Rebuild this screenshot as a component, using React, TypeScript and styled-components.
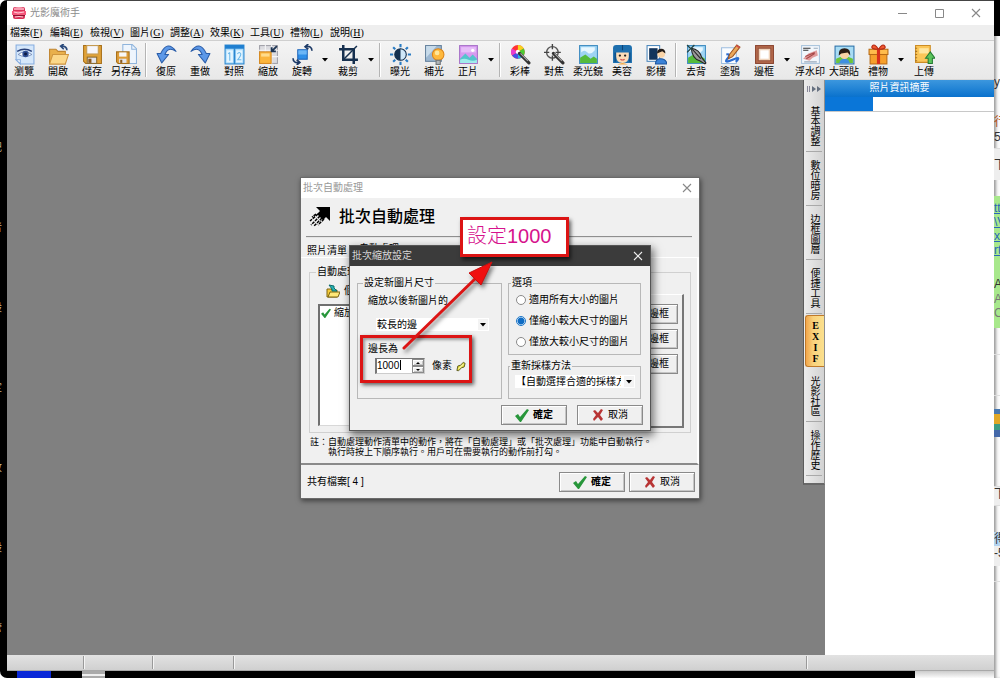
import React from "react";
import styled, { createGlobalStyle, css } from "styled-components";

const Global = createGlobalStyle`
  *, *::before, *::after { box-sizing: border-box; }
  html, body { margin: 0; padding: 0; background: #000; }
  body, button, input, select {
    font-family: "Liberation Sans", "Noto Sans CJK TC", sans-serif;
    font-size: 10px;
    line-height: 12px;
    color: #000;
  }
  button { margin: 0; padding: 0; border: 0; background: none; }
  svg { display: block; flex: none; }
  h1, h2, p, ul { margin: 0; padding: 0; font-size: inherit; font-weight: inherit; }
  ul { list-style: none; }
`;

/* ---------- desktop ---------- */

const Desktop = styled.div`
  position: relative;
  display: grid;
  grid-template-columns: 7px minmax(0, 1fr) 6px;
  grid-template-rows: minmax(0, 1fr) 7px;
  min-height: 100vh;
  overflow: hidden;
  background: #000;
`;

const LeftStrip = styled.div`
  grid-row: 1 / 3;
  display: flex;
  flex-direction: column;
  gap: 68px;
  padding-top: 142px;
  overflow: hidden;
  border-radius: 7px 0 0 7px;
  box-shadow: 0 0 0 7px #fff;
  clip-path: inset(0);
  color: #c8b48c;
`;

const LeftGlyph = styled.span`
  width: 2px;
  height: 12px;
  overflow: hidden;
  direction: rtl;
  white-space: nowrap;
`;

const RightStrip = styled.div`
  grid-column: 3;
  grid-row: 1 / 3;
  display: flex;
  flex-direction: column;
  overflow: hidden;
  background: #fbfbfb;
  box-shadow: inset 3px 0 3px -1px #999;
`;

const Slice = styled.div<{ $h: number; $bg?: string; $fg?: string; $line?: boolean }>`
  flex: none;
  height: ${(p) => p.$h}px;
  overflow: hidden;
  white-space: nowrap;
  font-size: 12px;
  line-height: 14px;
  background: ${(p) => p.$bg ?? "transparent"};
  color: ${(p) => p.$fg ?? "#333"};
  ${(p) => p.$line && css`border-bottom: 1px solid #ddd;`}
`;

const SliceLink = styled.a`
  display: block;
  color: #2a66b8;
`;

const BottomStrip = styled.div`
  grid-column: 2;
  grid-row: 2;
  display: flex;
  background: #000;
`;

const Chip = styled.span<{ $w: number; $bg?: string }>`
  width: ${(p) => p.$w}px;
  background: ${(p) => p.$bg ?? "transparent"};
`;

const BottomPage = styled.span`
  width: 79px;
  margin-left: auto;
  background: linear-gradient(#ccc, #fbfbfb);
`;

/* ---------- main window ---------- */

const MainWindow = styled.main`
  grid-column: 2;
  grid-row: 1;
  display: flex;
  flex-direction: column;
  min-width: 0;
  border-top: 1px solid #444;
  background: #efefef;
`;

const TitleBar = styled.header`
  display: flex;
  align-items: center;
  gap: 4px;
  height: 24px;
  padding: 0 11px 0 5px;
  background: #fff;
  color: #8c8c8c;
`;

const WindowTitle = styled.h1`
  flex: 1;
`;

const WindowButtons = styled.div`
  display: flex;
  gap: 23px;
`;

const IconButton = styled.button`
  display: grid;
  place-items: center;
  width: 14px;
  height: 14px;
`;

const MenuBar = styled.nav`
  display: flex;
  height: 16px;
  padding-left: 3px;
  background: #eee;
  border-bottom: 1px solid #cfcfcf;
`;

const MenuButton = styled.button`
  width: 40px;
  text-align: left;
  white-space: nowrap;
`;

const Mnemonic = styled.span`
  font-family: "Liberation Serif", serif;
`;

const ToolBar = styled.div`
  display: flex;
  height: 39px;
  background: linear-gradient(#f4f4f4, #e8e8e8);
  border-bottom: 1px solid #d8d8d8;
`;

const ToolButton = styled.button`
  display: flex;
  flex-direction: column;
  align-items: center;
  gap: 1px;
  width: 34px;
  padding-top: 3px;
  white-space: nowrap;
`;

const DropButton = styled.button`
  display: grid;
  place-items: center;
  width: 12px;
`;

const ToolSeparator = styled.span`
  width: 2px;
  margin: 2px;
  border-left: 1px solid #b4b4b4;
  border-right: 1px solid #fff;
`;

const Workspace = styled.div`
  flex: 1;
  display: flex;
  align-items: stretch;
  min-height: 0;
  background: #808080;
`;

const Canvas = styled.section`
  flex: 1;
`;

const Rail = styled.nav`
  align-self: flex-start;
  display: flex;
  flex-direction: column;
  width: 22px;
  padding-bottom: 7px;
  background: linear-gradient(90deg, #ececec, #d2d2d2);
  border-left: 1px solid #5c5c5c;
  border-right: 1px solid #8f8f8f;
  border-bottom: 2px solid #686868;
`;

const RailHandle = styled.button`
  display: grid;
  place-items: center;
  height: 18px;
`;

const RailTab = styled.button<{ $active?: boolean }>`
  display: flex;
  align-items: center;
  justify-content: center;
  height: 54px;
  padding-top: 2px;
  writing-mode: vertical-rl;
  text-orientation: upright;
  background: linear-gradient(#a9a9a9, #a9a9a9) center bottom / 16px 1px no-repeat;
  ${(p) =>
    p.$active &&
    css`
      height: 52px;
      margin: 1px 0 1px 1px;
      border: 1px solid #c07a2a;
      border-right: 0;
      border-radius: 3px 0 0 3px;
      background: linear-gradient(90deg, #f3a64a, #f9d27c 40%, #fbe08e);
      font-family: "Liberation Serif", serif;
      font-weight: 700;
    `}
`;

const InfoPanel = styled.aside`
  width: 169px;
  background: #fff;
`;

const InfoTitle = styled.h2`
  height: 17px;
  padding-right: 20px;
  line-height: 16px;
  text-align: center;
  color: #fff;
  background: linear-gradient(#3c97de, #0a72cd);
`;

const InfoRow = styled.div`
  display: grid;
  grid-template-columns: 48px 1fr;
  height: 15px;
  border-bottom: 1px solid #c8c8c8;
`;

const InfoKey = styled.span`
  background: #0a76d8;
`;

const StatusBar = styled.footer`
  display: flex;
  height: 16px;
  background: linear-gradient(#e2e2e2, #d0d0d0);
  border-bottom: 1px solid #a8a8a8;
`;

const StatusCell = styled.span<{ $w?: number }>`
  ${(p) => (p.$w ? css`width: ${p.$w}px;` : css`flex: 1;`)}
  margin: 1px 0;
  border-right: 1px solid #999;
  box-shadow: 1px 0 0 #f4f4f4;
`;

/* ---------- dialogs ---------- */

const BatchDialog = styled.section`
  position: absolute;
  left: calc(50% - 199px);
  top: calc(50% - 161px);
  width: 398px;
  display: flex;
  flex-direction: column;
  background: #f0f0f0;
  box-shadow: 0 0 0 1px #6a6a6a, 1px 2px 5px 1px rgba(0, 0, 0, 0.5);
`;

const ScaleDialog = styled.section`
  position: absolute;
  left: 49px;
  top: 68px;
  width: 300px;
  background: #f0f0f0;
  box-shadow: 0 0 0 1px #555, 2px 4px 8px 2px rgba(0, 0, 0, 0.5);
`;

const DialogBar = styled.header<{ $dark?: boolean }>`
  display: flex;
  align-items: center;
  justify-content: space-between;
  height: 20px;
  padding: 0 5px 0 2px;
  background: ${(p) => (p.$dark ? "#3b3b3b" : "#fff")};
  color: ${(p) => (p.$dark ? "#d8d8d8" : "#999")};
`;

const DialogHeading = styled.div`
  display: flex;
  align-items: center;
  gap: 8px;
  height: 40px;
  margin: 0 7px 0 5px;
  padding-left: 3px;
  border-bottom: 2px groove #e4e4e4;
`;

const HeadingText = styled.h2`
  font-size: 16px;
  line-height: 20px;
  font-weight: 500;
`;

const TabRow = styled.div`
  display: flex;
  align-items: flex-end;
  gap: 12px;
  height: 19px;
  padding-left: 6px;
`;

const Tab = styled.button<{ $active?: boolean }>`
  height: ${(p) => (p.$active ? 14 : 12)}px;
  line-height: 12px;
  display: flex;
`;

const TabPage = styled.div`
  padding: 8px 6px 6px 8px;
  border-top: 1px solid #fff;
  border-right: 2px solid #fff;
  border-bottom: 2px solid #8a8a8a;
`;

const Group = styled.fieldset`
  min-width: 0;
  margin: 0;
  padding: 0 6px 6px 10px;
  border: 1px solid #b8b8b8;
  box-shadow: none;
`;

const Legend = styled.legend`
  height: 12px;
  margin-left: -5px;
  padding: 0 1px;
  white-space: nowrap;
`;

const ActionGroup = styled(Group)`
  height: 167px;
  padding: 0 6px 4px 8px;
  border-color: #d0d0d0;
`;

const ActionLegend = styled(Legend)`
  margin-left: -2px;
`;

const ActionGrid = styled.div`
  display: grid;
  grid-template-columns: 1fr 60px;
  height: 150px;
`;

const ActionList = styled.div`
  display: flex;
  flex-direction: column;
`;

const ActionTool = styled.button`
  display: flex;
  align-items: center;
  gap: 4px;
  height: 26px;
  padding-left: 8px;
`;

const ListBox = styled.ul`
  flex: 1;
  margin-bottom: 2px;
  padding: 1px;
  background: #fff;
  border: 1px solid #d8d8d8;
  border-top: 2px solid #707070;
  border-left: 2px solid #707070;
`;

const ListItem = styled.li`
  display: flex;
  align-items: center;
  gap: 3px;
`;

const FrameButtons = styled.div`
  display: flex;
  flex-direction: column;
  gap: 5px;
  margin-top: 16px;
  padding: 9px 4px 0 0;
  border-top: 1px solid #fff;
  border-right: 2px solid #777;
  border-bottom: 2px solid #777;
`;

const raised = css`
  border: 1px solid #8a8a8a;
  background: #f0f0f0;
  box-shadow: inset 1px 1px 0 #fff, inset -1px -1px 0 #c6c6c6;
`;

const FrameButton = styled.button`
  ${raised}
  height: 20px;
  padding-right: 8px;
  text-align: right;
`;

const Note = styled.p`
  margin-top: 4px;
  padding-left: 19px;
  text-indent: -18px;
  font-size: 9px;
  line-height: 10px;
  white-space: nowrap;
`;

const SecondNote = styled(Note)`
  margin-top: 0;
  text-indent: 0;
`;

const DialogFooter = styled.footer`
  display: flex;
  align-items: center;
  gap: 4px;
  height: 33px;
  padding: 0 4px 0 6px;
`;

const FileCount = styled.span`
  flex: 1;
`;

const PushButton = styled.button<{ $strong?: boolean }>`
  ${raised}
  display: flex;
  align-items: center;
  justify-content: center;
  gap: 4px;
  width: 66px;
  height: 20px;
  font-weight: ${(p) => (p.$strong ? 700 : 400)};
`;

const ScaleBody = styled.div`
  display: grid;
  grid-template-columns: 145px 133px;
  gap: 6px;
  padding: 11px 8px 6px 7px;
`;

const SizeGroup = styled(Group)`
  display: flex;
  flex-direction: column;
  align-items: flex-start;
`;

const RightColumn = styled.div`
  display: flex;
  flex-direction: column;
  justify-content: space-between;
  gap: 5px;
`;

const FieldLabel = styled.label`
  margin-top: 6px;
`;

const SelectBox = styled.div<{ $w: number }>`
  position: relative;
  width: ${(p) => p.$w}px;
  height: 13px;
  background: #fff;
`;

const Select = styled.select`
  display: block;
  width: 100%;
  height: 13px;
  padding: 0 14px 0 1px;
  border: 0;
  border-radius: 0;
  background: transparent;
  appearance: none;
  overflow: hidden;
`;

const SelectArrow = styled.span`
  position: absolute;
  right: 1px;
  top: 1px;
  display: grid;
  place-items: center;
  width: 10px;
  height: 11px;
  background: #f3f3f3;
  pointer-events: none;
`;

const SizeRow = styled.div`
  display: flex;
  align-items: center;
  gap: 4px;
  margin: 3px 0 0 7px;
`;

const SpinBox = styled.div`
  display: flex;
  width: 50px;
  height: 16px;
  margin-right: 3px;
  background: #fff;
  border: 1px solid #ccc;
  border-top-color: #777;
  border-left: 2px solid #777;
`;

const SpinInput = styled.input`
  width: 23px;
  padding: 0;
  border: 0;
  outline: 0;
  background: transparent;
`;

const Caret = styled.span`
  width: 1px;
  height: 10px;
  margin: 1px auto 0 0;
  background: #000;
`;

const SpinButtons = styled.div`
  display: flex;
  flex-direction: column;
  width: 12px;
`;

const SpinButton = styled.button`
  ${raised}
  flex: 1;
  display: grid;
  place-items: center;
`;

const Indented = styled.div`
  margin: 11px 0 12px 8px;
`;

const RadioRow = styled.label`
  display: flex;
  align-items: center;
  gap: 3px;
  height: 21px;
  white-space: nowrap;
`;

const Radio = styled.input`
  flex: none;
  width: 10px;
  height: 10px;
  margin: 0;
  appearance: none;
  border: 1px solid #8a8a8a;
  border-radius: 50%;
  background: #fff;
  &:checked {
    border-color: #1a76c8;
    background: radial-gradient(circle, #0f6cc4 0 3px, #fff 4px);
  }
`;

const OptionGroup = styled(Group)`
  padding: 0 0 2px 7px;
`;

const SampleGroup = styled(Group)`
  padding: 3px 0 10px 6px;
`;

const ScaleButtons = styled.div`
  display: flex;
  justify-content: flex-end;
  gap: 10px;
  padding: 0 7px 5px 0;
`;

/* ---------- annotations ---------- */

const Highlight = styled.div`
  position: absolute;
  left: 59px;
  top: 157px;
  width: 112px;
  height: 48px;
  border: 3px solid #dc1414;
  box-shadow: 2px 2px 4px rgba(0, 0, 0, 0.6), inset 2px 2px 3px rgba(0, 0, 0, 0.35);
  pointer-events: none;
`;

const Callout = styled.div`
  position: absolute;
  left: 159px;
  top: 39px;
  width: 109px;
  height: 40px;
  padding-left: 4px;
  border: 3px solid #dc1414;
  background: #fff;
  box-shadow: 2px 3px 4px rgba(0, 0, 0, 0.6);
  color: #d6128c;
  font-size: 20px;
  font-weight: 300;
  line-height: 32px;
  white-space: nowrap;
`;

const ArrowLayer = styled.svg`
  position: absolute;
  left: 97px;
  top: 76px;
  pointer-events: none;
  filter: drop-shadow(2px 3px 2px rgba(0, 0, 0, 0.5));
`;

/* ---------- icons ---------- */

const Ico = ({ children }: { children: React.ReactNode }) => (
  <svg width="21" height="21" viewBox="0 0 20 20" fill="none" aria-hidden="true">{children}</svg>
);

const Wand = () => (
  <>
    <path d="M9 9l9 9" stroke="#333" strokeWidth="3" strokeLinecap="round" />
    <path d="M10 9l7 7" stroke="#aaa" strokeWidth="1" />
  </>
);

const Landscape = () => (
  <>
    <rect x="1.5" y="1.5" width="17" height="17" fill="#9fd4f4" stroke="#3f8cc0" />
    <path d="M3 8q3-3 6 0t7-2V3H3z" fill="#e8f7ff" />
    <path d="M2 18v-5l5-3 5 4 3-2 3 2v4z" fill="#55bb3c" />
  </>
);

const icons: Record<string, React.ReactNode> = {
  browse: (
    <Ico>
      <path d="M2 1h17v18H6l-4-4z" fill="#d5e7fa" stroke="#86ade0" />
      <path d="M2 15h4v4z" fill="#fff" stroke="#86ade0" />
      <path d="M4 10q6-5 13 0-6 4-13 0z" fill="#fff" stroke="#5c76ac" strokeWidth=".7" />
      <circle cx="11" cy="9.5" r="3" fill="#2f4f94" />
      <circle cx="11" cy="9.5" r="1.4" fill="#0b1a40" />
      <path d="M3 7q7-4 14 0" stroke="#28407a" strokeWidth="1.4" />
    </Ico>
  ),
  open: (
    <Ico>
      <path d="M1.500 19V5h6l2 2h7v12z" fill="#e9b04c" stroke="#c08530" />
      <path d="M1.500 19l3-9h15l-3 9z" fill="#fcd88a" stroke="#cf9640" />
      <path d="M18 6q0-4-5-4m2-2l-3 2 3 3" stroke="#2c4b7c" strokeWidth="1.6" />
    </Ico>
  ),
  save: (
    <Ico>
      <path d="M1.500 1.500h17v17h-15l-2-2z" fill="#e0a238" stroke="#a8701a" />
      <rect x="4.500" y="1.500" width="11" height="8" fill="#f6f6fa" stroke="#c49a50" />
      <rect x="5" y="12.500" width="9" height="6" fill="#e5e5ea" stroke="#8a6a30" />
      <rect x="6" y="14" width="3" height="4" fill="#8a5a20" />
    </Ico>
  ),
  saveAs: (
    <Ico>
      <path d="M6.500.500h9l4 4v14h-13z" fill="#eef5fd" stroke="#8fb4dc" />
      <path d="M15 1v4h4" stroke="#8fb4dc" />
      <path d="M.5 7.500h12v11H2l-1.500-1.500z" fill="#dd9c38" stroke="#a8701a" />
      <rect x="3" y="8" width="7" height="4" fill="#f8f8f8" />
      <rect x="3" y="14" width="7" height="4" fill="#e5e5ea" />
      <rect x="4" y="15" width="2" height="3" fill="#8a5a20" />
    </Ico>
  ),
  undo: (
    <Ico>
      <path d="M19 7Q11-4 4.500 9H1l4.500 9L12 10H8.500q3-8 10.500-3z" fill="#5c98e8" stroke="#2b5da8" strokeLinejoin="round" />
    </Ico>
  ),
  redo: (
    <Ico>
      <path d="M1 7q8-11 14.500 2H19l-4.500 9L8 10h3.500Q8.500 2 1 7z" fill="#5c98e8" stroke="#2b5da8" strokeLinejoin="round" />
    </Ico>
  ),
  compare: (
    <Ico>
      <rect x="1" y="1" width="18" height="18" fill="#a8dafa" stroke="#2b86cf" />
      <rect x="1" y="1" width="18" height="3.500" fill="#1f7fd0" />
      <path d="M10 4v15" stroke="#2b86cf" strokeWidth="1.500" />
      <rect x="2.500" y="6" width="6" height="11.500" fill="#e4f5ff" />
      <rect x="11.500" y="6" width="6" height="11.500" fill="#e4f5ff" />
      <path d="M5.500 8v8M4 9.500L5.500 8M12.800 9.500q1.700-3 3.200 0 0 2-3 5.500h3.500" stroke="#6cb8ea" />
    </Ico>
  ),
  resize: (
    <Ico>
      <rect x="1.500" y="1.500" width="17" height="17" fill="#dcdce0" stroke="#a0a0a8" />
      <path d="M1 6h18M1 12h18M7 1v18M13 1v18" stroke="#f6f6f8" />
      <rect x="1.500" y="7.500" width="11" height="11" fill="#fbb53c" stroke="#d88a20" />
      <path d="M3 9h8v3H3z" fill="#ffdc8c" />
      <path d="M18 2l-5 5m0-4v4h4" stroke="#1d3554" strokeWidth="1.800" />
    </Ico>
  ),
  rotate: (
    <Ico>
      <rect x="5.500" y="5.500" width="9" height="9" fill="#2f8fe8" stroke="#1a62b8" />
      <path d="M6 6h8v4H6z" fill="#6cb6f6" />
      <path d="M13 2.500q6-1 6 4M15.500 0l-3 2.500 3 2.500M7 17.500q-6 1-6-4M4.500 15l3 2.500-3 2.500" stroke="#1d3a66" strokeWidth="1.600" />
    </Ico>
  ),
  crop: (
    <Ico>
      <path d="M5 1v14h14M1 5h14v14" stroke="#16304f" strokeWidth="2.400" />
      <path d="M5 15L18 2" stroke="#16304f" strokeWidth="1.400" />
    </Ico>
  ),
  exposure: (
    <Ico>
      <path d="M10 0v3M10 17v3M0 10h3M17 10h3M3 3l2 2M15 15l2 2M3 17l2-2M15 5l2-2" stroke="#2a7cc4" strokeWidth="2" />
      <circle cx="10" cy="10" r="5.500" fill="#14304f" stroke="#14304f" />
      <path d="M10 5a5 5 0 010 10z" fill="#cfe7f8" />
    </Ico>
  ),
  fill: (
    <Ico>
      <rect x="1.500" y="1.500" width="15" height="15" fill="#9db8d2" stroke="#64809c" />
      <path d="M2 2h10L2 13z" fill="#c8dbea" />
      <circle cx="13.500" cy="10" r="5.500" fill="#ffb93c" stroke="#dc8418" />
      <circle cx="12.500" cy="8.500" r="2.200" fill="#ffe79a" />
      <rect x="11.500" y="15.500" width="4" height="4" fill="#b0b4b8" stroke="#707478" />
    </Ico>
  ),
  positive: (
    <Ico>
      <rect x="1.500" y="1.500" width="17" height="17" fill="#d79af0" stroke="#a874c8" />
      <path d="M3 3h14v5H3z" fill="#e6bdf8" />
      <circle cx="14" cy="6" r="1.500" fill="#fff" />
      <path d="M2 18v-4l5-5 4 4 3-3 4 4v4z" fill="#54c4cc" />
      <path d="M2 15q4-2 8 0t8 0v3H2z" fill="#a0ecec" />
    </Ico>
  ),
  colorWand: (
    <Ico>
      <circle cx="7.500" cy="7.500" r="6.500" fill="#f33" />
      <path d="M7.500 7.500V1a6.500 6.500 0 015.600 3.200z" fill="#f6d21e" />
      <path d="M7.500 7.500l5.600-3.300a6.500 6.500 0 010 6.600z" fill="#4ccc34" />
      <path d="M7.500 7.500l5.600 3.300A6.500 6.500 0 017.500 14z" fill="#25b4e8" />
      <path d="M7.500 7.500V14a6.500 6.500 0 01-5.600-3.200z" fill="#4450e8" />
      <path d="M7.500 7.500L1.900 10.800a6.500 6.500 0 010-6.600z" fill="#e83cd0" />
      <circle cx="7.500" cy="7.500" r="2" fill="#fff" />
      <Wand />
    </Ico>
  ),
  focusWand: (
    <Ico>
      <circle cx="8" cy="8" r="5.500" stroke="#555" strokeWidth="1.300" />
      <path d="M8 0v5M8 11v5M0 8h5M11 8h5" stroke="#444" strokeWidth="1.300" />
      <Wand />
    </Ico>
  ),
  soft: <Ico><Landscape /></Ico>,
  beauty: (
    <Ico>
      <path d="M1 18V4q0-3 3-3h12q3 0 3 3v14z" fill="#1d6fae" />
      <path d="M3 17V8M17 17V8M10 1v5" stroke="#0d4478" />
      <path d="M4 8h12v4q0 6-6 6t-6-6z" fill="#fbdcb8" />
      <circle cx="7.500" cy="11" r="1.100" fill="#222" />
      <circle cx="12.500" cy="11" r="1.100" fill="#222" />
      <path d="M8 14.500q2 1.500 4 0" stroke="#d04c4c" />
      <path d="M5 19.500q5-3 10 0z" fill="#f2a840" />
    </Ico>
  ),
  studio: (
    <Ico>
      <rect x="1" y="1.500" width="12" height="15" fill="#fff" stroke="#4a86bc" />
      <rect x="3" y="4" width="8" height="11" fill="#12345c" />
      <path d="M9 19q0-5 5-5t6 5z" fill="#3a82d8" stroke="#1c549c" />
      <circle cx="14.500" cy="9.500" r="3.600" fill="#fad4a8" />
      <path d="M10.500 9q0-4.500 4-4.500t4 4.500l-3-2z" fill="#241c18" />
    </Ico>
  ),
  cutout: (
    <Ico>
      <Landscape />
      <path d="M5 4q8 1 10 9l4 5-1 1-5-3Q6 14 5 4z" fill="#999" stroke="#222" />
      <path d="M6 5l8 9" stroke="#222" />
      <path d="M1 1l5 5M8 1L5 4M1 8l3-3" stroke="#244" strokeWidth="1.200" />
    </Ico>
  ),
  doodle: (
    <Ico>
      <path d="M1.500 3.500h14v15h-14z" fill="#fafcff" stroke="#9dbddf" />
      <path d="M6 10q5-1 1 4t5 1 3 2" stroke="#2a6cd0" strokeWidth="2" />
      <path d="M9 10l7-9 3 2-7 9-4 2z" fill="#eba85c" stroke="#9c5420" />
      <path d="M15 2l3 2 1-1-3-2z" fill="#d84c4c" />
    </Ico>
  ),
  frame: (
    <Ico>
      <rect x="1.500" y="1.500" width="17" height="17" fill="#b46a4c" stroke="#8a4430" />
      <rect x="4" y="4" width="12" height="12" fill="#f0d4bc" stroke="#96523a" />
      <rect x="6" y="6" width="8" height="8" fill="#fff" />
    </Ico>
  ),
  watermark: (
    <Ico>
      <rect x="1.500" y="1.500" width="17" height="17" fill="#f2f7fc" stroke="#a9c4dc" />
      <path d="M3 4h7M3 6h5" stroke="#333" />
      <path d="M13 4h4M4 17h12" stroke="#9ab" />
      <path d="M3 14l5-5 8-3 1 5-5 2-3 3z" fill="#dc8484" opacity=".8" />
      <path d="M5 12l9-4M6 14l8-5" stroke="#a84848" />
    </Ico>
  ),
  sticker: (
    <Ico>
      <rect x="1" y="2" width="18" height="17" fill="#a8dcf4" stroke="#2c70a8" />
      <path d="M2 18v-4q8-4 16 0v4z" fill="#6cc43c" />
      <path d="M5 18q1-4 5-4t5 4z" fill="#3f8fe0" />
      <circle cx="10" cy="10" r="4.300" fill="#fad2a4" />
      <path d="M4.500 11Q4 4 10 4t5.500 7L13 8 7 9z" fill="#2c1c14" />
    </Ico>
  ),
  gift: (
    <Ico>
      <rect x="2" y="9" width="16" height="10" fill="#f6a02c" stroke="#b86a14" />
      <rect x="1" y="5" width="18" height="5" fill="#ffbc4c" stroke="#b86a14" />
      <path d="M8.500 5h3v14h-3z" fill="#d8301c" />
      <path d="M10 5Q6-1 4 2t6 3q4-6 6-3t-6 3z" fill="#f05a30" stroke="#b42814" />
    </Ico>
  ),
  upload: (
    <Ico>
      <path d="M1.500 1.500h14v16h-14z" fill="#fbc658" stroke="#cc8c24" />
      <path d="M5 4h9v5H5z" fill="#ffe6a0" />
      <path d="M1 4h2M1 7h2M1 10h2M1 13h2M1 16h2" stroke="#a87424" />
      <path d="M15.500 7.500l4.500 6h-2.500v5h-4v-5H11z" fill="#5cc45c" stroke="#247c34" />
    </Ico>
  ),
};

const CaretDown = () => (
  <svg width="6" height="4" viewBox="0 0 6 4" aria-hidden="true"><path d="M0 0h6L3 3.500z" fill="#000" /></svg>
);

const Cross = ({ color }: { color: string }) => (
  <svg width="10" height="10" viewBox="0 0 10 10" aria-hidden="true">
    <path d="M1 1l8 8M9 1L1 9" stroke={color} strokeWidth="1.100" />
  </svg>
);

const CheckIcon = ({ size = 14 }: { size?: number }) => (
  <svg width={size} height={size} viewBox="0 0 14 14" aria-hidden="true">
    <path d="M0 8l3-2 2 3 7-8 2 1-8 12H5z" fill="#27963a" />
  </svg>
);

const CancelIcon = () => (
  <svg width="12" height="12" viewBox="0 0 12 12" aria-hidden="true">
    <path d="M1 2l2-1 3 3 3-4 2 1-3 5 3 4-2 2-3-4-4 4-1-2 3-4z" fill="#b83434" />
  </svg>
);

const AppLogo = () => (
  <svg width="14" height="14" viewBox="0 0 14 14" aria-hidden="true">
    <rect x="1" y="1" width="12" height="12" rx="2" fill="#d83058" />
    <path d="M2 2q5-2 10 0v2H2z" fill="#f79cb0" />
    <path d="M0 5h14v4H0z" fill="#f4587c" />
    <path d="M2 6l4 1 6-1M3 11q4-1 8 0" stroke="#ffd0da" fill="none" />
    <path d="M1 9.500h12" stroke="#8c1430" />
  </svg>
);

/* ---------- data ---------- */

const menus = [
  ["檔案", "F"], ["編輯", "E"], ["檢視", "V"], ["圖片", "G"], ["調整", "A"],
  ["效果", "K"], ["工具", "U"], ["禮物", "L"], ["說明", "H"],
];

type Tool = { icon: string; label: string; drop?: boolean };
const toolGroups: Tool[][] = [
  [
    { icon: "browse", label: "瀏覽" },
    { icon: "open", label: "開啟" },
    { icon: "save", label: "儲存" },
    { icon: "saveAs", label: "另存為" },
  ],
  [
    { icon: "undo", label: "復原" },
    { icon: "redo", label: "重做" },
    { icon: "compare", label: "對照" },
    { icon: "resize", label: "縮放" },
    { icon: "rotate", label: "旋轉", drop: true },
    { icon: "crop", label: "裁剪", drop: true },
  ],
  [
    { icon: "exposure", label: "曝光" },
    { icon: "fill", label: "補光" },
    { icon: "positive", label: "正片", drop: true },
  ],
  [
    { icon: "colorWand", label: "彩棒" },
    { icon: "focusWand", label: "對焦" },
    { icon: "soft", label: "柔光鏡" },
    { icon: "beauty", label: "美容" },
    { icon: "studio", label: "影樓" },
  ],
  [
    { icon: "cutout", label: "去背" },
    { icon: "doodle", label: "塗鴉" },
    { icon: "frame", label: "邊框", drop: true },
    { icon: "watermark", label: "浮水印" },
    { icon: "sticker", label: "大頭貼" },
    { icon: "gift", label: "禮物", drop: true },
    { icon: "upload", label: "上傳" },
  ],
];

const railTabs = ["基本調整", "數位暗房", "边框圖層", "便捷工具", "EXIF", "光影社區", "操作歷史"];
const scopes = ["適用所有大小的圖片", "僅縮小較大尺寸的圖片", "僅放大較小尺寸的圖片"];

/* ---------- views ---------- */

const ConfirmButtons = () => (
  <>
    <PushButton $strong><CheckIcon />確定</PushButton>
    <PushButton><CancelIcon />取消</PushButton>
  </>
);

const ScaleSettings = () => (
  <ScaleDialog role="dialog" aria-label="批次縮放設定">
    <DialogBar $dark>
      <h2>批次縮放設定</h2>
      <IconButton aria-label="關閉"><Cross color="#eee" /></IconButton>
    </DialogBar>
    <ScaleBody>
      <SizeGroup>
        <Legend>設定新圖片尺寸</Legend>
        <FieldLabel htmlFor="side">縮放以後新圖片的</FieldLabel>
        <Indented>
          <SelectBox $w={113}>
            <Select id="side"><option>較長的邊</option></Select>
            <SelectArrow><CaretDown /></SelectArrow>
          </SelectBox>
        </Indented>
        <label htmlFor="length">邊長為</label>
        <SizeRow>
          <SpinBox>
            <SpinInput id="length" defaultValue="1000" />
            <Caret />
            <SpinButtons>
              <SpinButton aria-label="增加">
                <svg width="4" height="2" viewBox="0 0 4 2"><path d="M0 2l2-2 2 2z" /></svg>
              </SpinButton>
              <SpinButton aria-label="減少">
                <svg width="4" height="2" viewBox="0 0 4 2"><path d="M0 0l2 2 2-2z" /></svg>
              </SpinButton>
            </SpinButtons>
          </SpinBox>
          <span>像素</span>
          <svg width="10" height="11" viewBox="0 0 11 11" aria-hidden="true">
            <path d="M1 10l1-5 3-1 3-3 2 1-1 4-3 1-3 3z" fill="#e4dc3c" stroke="#55551c" />
            <path d="M3 8l5-5" stroke="#fff" />
          </svg>
        </SizeRow>
      </SizeGroup>
      <RightColumn>
        <OptionGroup>
          <Legend>選項</Legend>
          {scopes.map((s, i) => (
            <RadioRow key={s}>
              <Radio type="radio" name="scope" defaultChecked={i === 1} />
              {s}
            </RadioRow>
          ))}
        </OptionGroup>
        <SampleGroup>
          <Legend>重新採樣方法</Legend>
          <SelectBox $w={120}>
            <Select aria-label="重新採樣方法"><option>【自動選擇合適的採樣方法】</option></Select>
            <SelectArrow><CaretDown /></SelectArrow>
          </SelectBox>
        </SampleGroup>
      </RightColumn>
    </ScaleBody>
    <ScaleButtons><ConfirmButtons /></ScaleButtons>
  </ScaleDialog>
);

const BatchProcessing = () => (
  <BatchDialog role="dialog" aria-label="批次自動處理">
    <DialogBar>
      <span>批次自動處理</span>
      <IconButton aria-label="關閉"><Cross color="#888" /></IconButton>
    </DialogBar>
    <DialogHeading>
      <svg width="22" height="22" viewBox="0 0 22 22" aria-hidden="true">
        <path d="M7 1h14v14l-4-4-3 3-6-6 3-3z" fill="#000" />
        <path d="M9 8l-8 7M11 10l-9 9M13 12l-8 8M15 13l-6 6M7 8l-4 3" stroke="#000" strokeWidth="1.500" strokeDasharray="3 1" />
      </svg>
      <HeadingText>批次自動處理</HeadingText>
    </DialogHeading>
    <TabRow role="tablist">
      <Tab role="tab">照片清單</Tab>
      <Tab role="tab" $active>自動處理</Tab>
    </TabRow>
    <TabPage>
      <ActionGroup>
        <ActionLegend>自動處理</ActionLegend>
        <ActionGrid>
          <ActionList>
            <ActionTool>
              <svg width="14" height="14" viewBox="0 0 14 14" aria-hidden="true">
                <path d="M1 13V5h4l1 1h5v7z" fill="#f6cc3c" stroke="#7c6410" />
                <path d="M2 13l2-5h10l-2 5z" fill="#ffe878" stroke="#7c6410" />
                <path d="M3 1l5 1v2l3 3-5 0 0-2z" fill="#28b4b4" stroke="#0c6c6c" />
              </svg>
              個
            </ActionTool>
            <ListBox>
              <ListItem><CheckIcon size={10} />縮放</ListItem>
            </ListBox>
          </ActionList>
          <FrameButtons>
            <FrameButton>邊框</FrameButton>
            <FrameButton>邊框</FrameButton>
            <FrameButton>邊框</FrameButton>
          </FrameButtons>
        </ActionGrid>
      </ActionGroup>
      <Note>註：自動處理動作清單中的動作，將在「自動處理」或「批次處理」功能中自動執行。</Note>
      <SecondNote>執行時按上下順序執行。用戶可在需要執行的動作前打勾。</SecondNote>
    </TabPage>
    <DialogFooter>
      <FileCount>共有檔案[ 4 ]</FileCount>
      <ConfirmButtons />
    </DialogFooter>
    <ScaleSettings />
    <Highlight />
    <Callout>設定1000</Callout>
    <ArrowLayer width="104" height="100" viewBox="0 0 104 100" aria-hidden="true">
      <path d="M6 94L80 22" stroke="#dc1414" strokeWidth="3" strokeLinecap="round" />
      <path d="M94 8L71 19l12 12z" fill="#f01010" stroke="#c81010" />
    </ArrowLayer>
  </BatchDialog>
);

export default function App() {
  return (
    <Desktop>
      <Global />
      <LeftStrip>
        {["記", "者", "設", "定", "收", "設", "管"].map((g, i) => <LeftGlyph key={i}>{g}</LeftGlyph>)}
      </LeftStrip>
      <MainWindow>
        <TitleBar>
          <AppLogo />
          <WindowTitle>光影魔術手</WindowTitle>
          <WindowButtons>
            <IconButton aria-label="最小化">
              <svg width="9" height="9" viewBox="0 0 9 9"><path d="M0 4.500h9" stroke="#888" /></svg>
            </IconButton>
            <IconButton aria-label="最大化">
              <svg width="9" height="9" viewBox="0 0 9 9"><path d="M.5.500h8v8h-8z" stroke="#888" fill="none" /></svg>
            </IconButton>
            <IconButton aria-label="關閉"><Cross color="#888" /></IconButton>
          </WindowButtons>
        </TitleBar>
        <MenuBar>
          {menus.map(([label, key]) => (
            <MenuButton key={key}>
              {label}<Mnemonic>(<u>{key}</u>)</Mnemonic>
            </MenuButton>
          ))}
        </MenuBar>
        <ToolBar role="toolbar">
          {toolGroups.map((group, g) => (
            <React.Fragment key={g}>
              {g > 0 && <ToolSeparator />}
              {group.map((t) => (
                <React.Fragment key={t.icon}>
                  <ToolButton>{icons[t.icon]}{t.label}</ToolButton>
                  {t.drop && <DropButton aria-label={t.label + "選單"}><CaretDown /></DropButton>}
                </React.Fragment>
              ))}
            </React.Fragment>
          ))}
        </ToolBar>
        <Workspace>
          <Canvas aria-label="畫布" />
          <Rail>
            <RailHandle aria-label="收合">
              <svg width="14" height="6" viewBox="0 0 14 6">
                <path d="M.5 0v6M2.500 0v6" stroke="#889" />
                <path d="M5 0l4 3-4 3zM10 0l4 3-4 3z" fill="#667080" />
              </svg>
            </RailHandle>
            {railTabs.map((t) => <RailTab key={t} $active={t === "EXIF"}>{t}</RailTab>)}
          </Rail>
          <InfoPanel>
            <InfoTitle>照片資訊摘要</InfoTitle>
            <InfoRow><InfoKey /></InfoRow>
          </InfoPanel>
        </Workspace>
        <StatusBar>
          <StatusCell $w={77} />
          <StatusCell $w={69} />
          <StatusCell $w={81} />
          <StatusCell />
          <Chip $w={187} />
        </StatusBar>
      </MainWindow>
      <RightStrip>
        <Slice $h={36} $bg="#000" />
        <Slice $h={39} />
        <Slice $h={40}>y整</Slice>
        <Slice $h={15} $fg="#b05020">行</Slice>
        <Slice $h={19} $line>55</Slice>
        <Slice $h={9} $bg="#eee" />
        <Slice $h={22} $bg="#eee">下</Slice>
        <Slice $h={16} />
        <Slice $h={5} $bg="#a8e88c" />
        <Slice $h={76} $bg="#a8e88c">
          <SliceLink href="#a">tt</SliceLink>
          <SliceLink href="#b">\V</SliceLink>
          <SliceLink href="#c">x.</SliceLink>
          <SliceLink href="#d">rt</SliceLink>
        </Slice>
        <Slice $h={15} $bg="#a8e88c">A</Slice>
        <Slice $h={14} $bg="#a8e88c" $fg="#777">A</Slice>
        <Slice $h={22} $bg="#a8e88c" $fg="#777">C</Slice>
        <Slice $h={27} $line />
        <Slice $h={41} $line />
        <Slice $h={13} />
        <Slice $h={5} $bg="#4878b0" />
        <Slice $h={10} $bg="#e0a828" />
        <Slice $h={6} $bg="#3c9c84" />
        <Slice $h={7} $bg="#4468a8" />
        <Slice $h={50} $line />
        <Slice $h={19} $bg="#eee" $line>下</Slice>
        <Slice $h={26} />
        <Slice $h={14} $bg="#b4d4f0">得</Slice>
        <Slice $h={20} $bg="#eee">-5</Slice>
        <Slice $h={16} $line />
      </RightStrip>
      <BottomStrip>
        <Chip $w={10} />
        <Chip $w={34} $bg="#0a28d8" />
        <Chip $w={31} />
        <Chip $w={23} $bg="repeating-linear-gradient(#aaa 0 3px, #eee 3px 5px)" />
        <BottomPage />
      </BottomStrip>
      <BatchProcessing />
    </Desktop>
  );
}
